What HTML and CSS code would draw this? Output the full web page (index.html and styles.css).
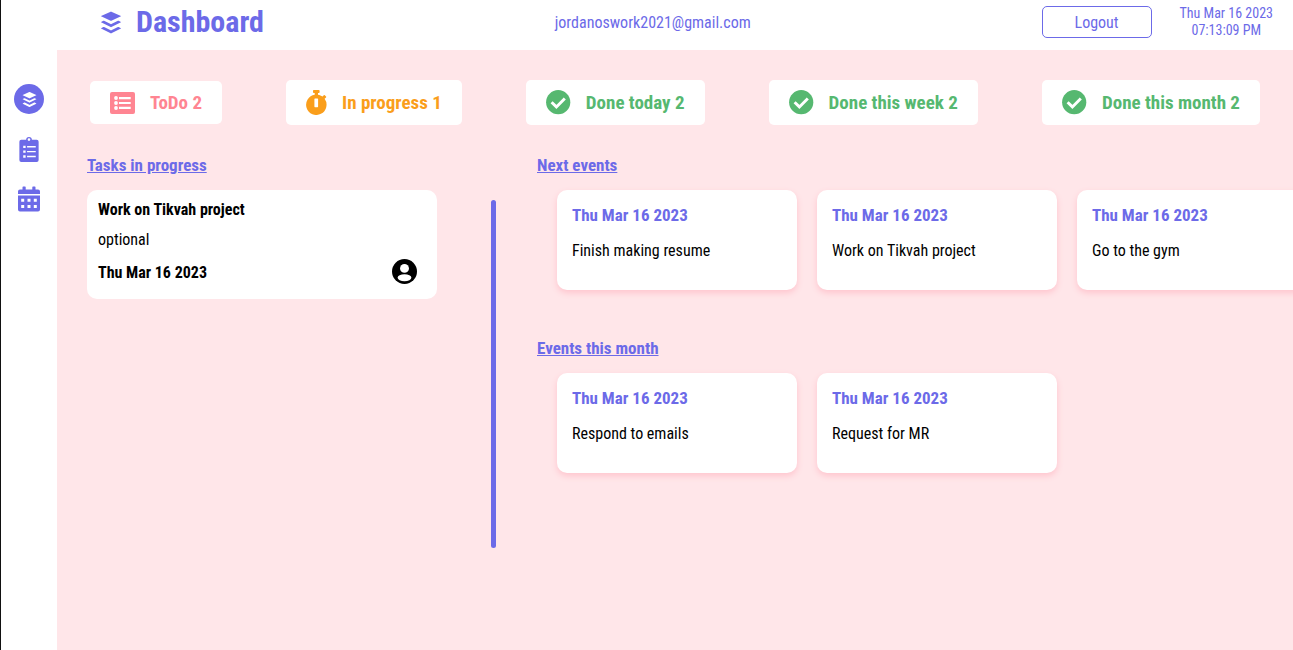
FILE: index.html
```html
<!DOCTYPE html>
<html lang="en">
<head>
<meta charset="utf-8">
<meta name="viewport" content="width=device-width, initial-scale=1">
<title>Dashboard</title>
<link rel="stylesheet" href="styles.css">
</head>
<body>
<svg class="defs" aria-hidden="true">
  <symbol id="layers" viewBox="0 0 448 512"><path d="M427.84 380.67l-196.5 97.82a18.6 18.6 0 0 1-14.67 0L20.16 380.67c-4-2-4-5.28 0-7.29L67.22 350a18.65 18.65 0 0 1 14.69 0l134.76 67a18.51 18.51 0 0 0 14.67 0l134.76-67a18.62 18.62 0 0 1 14.68 0l47.06 23.43c4.05 1.96 4.05 5.24 0 7.24zm0-136.53l-47.06-23.43a18.62 18.62 0 0 0-14.68 0l-134.76 67.08a18.68 18.68 0 0 1-14.67 0L81.91 220.71a18.65 18.65 0 0 0-14.69 0l-47.06 23.43c-4 2-4 5.29 0 7.31l196.51 97.8a18.6 18.6 0 0 0 14.67 0l196.5-97.8c4.05-2.02 4.05-5.3 0-7.31zM20.16 130.42l196.5 90.29a20.08 20.08 0 0 0 14.67 0l196.51-90.29c4-1.86 4-4.89 0-6.74L231.33 33.39a19.88 19.88 0 0 0-14.67 0l-196.5 90.28c-4.05 1.86-4.05 4.89 0 6.750z"/></symbol>
  <symbol id="check" viewBox="0 0 25 25"><circle cx="12.200" cy="12.200" r="12.100"/><path d="M5.600 12.200l4.800 4.700 8.400-8.500" fill="none" stroke="#fff" stroke-width="2.900"/></symbol>
</svg>
<div class="app">
  <header class="topbar">
    <div class="brand">
      <svg class="brand-icon"><use href="#layers"/></svg>
      <h1>Dashboard</h1>
    </div>
    <span class="email">jordanoswork2021@gmail.com</span>
    <div class="session">
      <button class="logout" type="button">Logout</button>
      <time class="clock">Thu Mar 16 2023<br>07:13:09 PM</time>
    </div>
  </header>
  <nav class="sidebar" aria-label="Main">
    <a class="nav-link active" href="#dashboard" aria-label="Dashboard"><svg><use href="#layers"/></svg></a>
    <a class="nav-link" href="#tasks" aria-label="Tasks">
      <svg viewBox="0 0 20 27"><path fill-rule="evenodd" d="M2 4h5a3 3 0 0 1 6 0h5a2 2 0 0 1 2 2v19a2 2 0 0 1-2 2H2a2 2 0 0 1-2-2V6a2 2 0 0 1 2-2zM10 2.300a1.400 1.400 0 1 0 0 2.800 1.400 1.400 0 0 0 0-2.800zM4 10v2.500h2.500V10zM8 10.500v1.500h9v-1.500zM4 15v2.500h2.500V15zM8 15.500v1.500h9v-1.500zM4 20v2.500h2.500V20zM8 20.500v1.500h9v-1.500z"/></svg>
    </a>
    <a class="nav-link" href="#calendar" aria-label="Calendar">
      <svg viewBox="0 0 22 25"><path fill-rule="evenodd" d="M5.200 0h1.800a.7.700 0 0 1 .7.700V3h6.600V.7a.7.700 0 0 1 .7-.7h1.800a.7.700 0 0 1 .7.700V3H20a2 2 0 0 1 2 2v2.500H0V5a2 2 0 0 1 2-2h2.500V.7a.7.700 0 0 1 .7-.7zM0 9h22v14a2 2 0 0 1-2 2H2a2 2 0 0 1-2-2zM3.200 12.200v3h3v-3zM9.500 12.200v3h3v-3zM15.800 12.200v3h3v-3zM3.200 18.500v3h3v-3zM9.500 18.500v3h3v-3zM15.800 18.500v3h3v-3z"/></svg>
    </a>
  </nav>
  <main class="content">
    <section class="stats" aria-label="Summary">
      <div class="stat todo">
        <svg class="stat-icon" viewBox="0 0 25 22"><rect width="25" height="22" rx="2"/><g fill="#fff"><circle cx="6" cy="6" r="1.900"/><circle cx="6" cy="11" r="1.900"/><circle cx="6" cy="16" r="1.900"/><path d="M9 5h11.700v2.200H9zM9 9.900h11.700v2.200H9zM9 14.800h11.700V17H9z"/></g></svg>
        <span>ToDo 2</span>
      </div>
      <div class="stat doing">
        <svg class="stat-icon" viewBox="0 0 21 25"><path fill-rule="evenodd" d="M7.800 0h5a.8.800 0 0 1 .8.800v1.500a.8.800 0 0 1-.8.800H12v1.600c1.700.2 3.200.9 4.500 1.800l1.300-1.300a.7.700 0 0 1 1 0l1.200 1.200a.7.700 0 0 1 0 1L18.600 8.800A10.200 10.200 0 1 1 8.700 4.700V3.100h-.9A.8.800 0 0 1 7 2.300V.8A.8.800 0 0 1 7.800 0zM9 8.600a.6.600 0 0 0-.6.600v7.400c0 .4.200.6.600.6h2.500c.4 0 .6-.2.600-.6V9.200a.6.600 0 0 0-.6-.6z"/></svg>
        <span>In progress 1</span>
      </div>
      <div class="stat done"><svg class="stat-icon"><use href="#check"/></svg><span>Done today 2</span></div>
      <div class="stat done"><svg class="stat-icon"><use href="#check"/></svg><span>Done this week 2</span></div>
      <div class="stat done"><svg class="stat-icon"><use href="#check"/></svg><span>Done this month 2</span></div>
    </section>
    <div class="board">
      <section class="tasks">
        <h2>Tasks in progress</h2>
        <article class="task">
          <h3>Work on Tikvah project</h3>
          <p>optional</p>
          <footer>
            <time>Thu Mar 16 2023</time>
            <svg class="avatar" viewBox="0 0 24 24"><circle cx="12" cy="12" r="12"/><g fill="#fff"><circle cx="12" cy="9" r="4.300"/><ellipse cx="12" cy="18" rx="6.600" ry="3.300"/></g></svg>
          </footer>
        </article>
      </section>
      <div class="divider"></div>
      <div class="events">
        <section>
          <h2>Next events</h2>
          <div class="event-row">
            <article class="event"><time>Thu Mar 16 2023</time><p>Finish making resume</p></article>
            <article class="event"><time>Thu Mar 16 2023</time><p>Work on Tikvah project</p></article>
            <article class="event"><time>Thu Mar 16 2023</time><p>Go to the gym</p></article>
          </div>
        </section>
        <section>
          <h2>Events this month</h2>
          <div class="event-row">
            <article class="event"><time>Thu Mar 16 2023</time><p>Respond to emails</p></article>
            <article class="event"><time>Thu Mar 16 2023</time><p>Request for MR</p></article>
          </div>
        </section>
      </div>
    </div>
  </main>
</div>
</body>
</html>
```
FILE: styles.css
```css
* { box-sizing: border-box; }
body, h1, h2, h3, p { margin: 0; }
body {
  font-family: "Roboto Condensed", Roboto, sans-serif;
  font-size: 16px;
  line-height: 20px;
  color: #000;
}
svg { display: block; fill: currentColor; }
.defs { display: none; }

.app {
  display: grid;
  grid-template-columns: 56px minmax(0, 1fr);
  grid-template-rows: 50px 1fr;
  min-height: 100vh;
  overflow: hidden;
  border-left: 1px solid #111;
  background: #fff;
}

.topbar {
  grid-column: 1 / -1;
  display: flex;
  align-items: center;
  justify-content: space-between;
  padding: 0 20px 6px 99px;
  color: #6c6ae8;
}
.brand { display: flex; align-items: center; gap: 14px; }
.brand-icon { width: 22px; height: 25px; }
h1 { font-size: 30px; line-height: 34px; }
.session { display: flex; align-items: center; gap: 28px; }
.email { line-height: 22px; padding-top: 2px; }
.logout {
  width: 110px;
  height: 32px;
  padding: 2px 0 0;
  border: 1px solid #6c6ae8;
  border-radius: 5px;
  background: #fff;
  color: inherit;
  font: inherit;
}
.clock { font-size: 14px; line-height: 17px; text-align: center; }

.sidebar {
  display: flex;
  flex-direction: column;
  align-items: center;
  gap: 20px;
  padding-top: 34px;
}
.nav-link { display: grid; place-items: center; width: 30px; height: 30px; color: #6c6ae8; }
.nav-link svg { width: 22px; height: 26px; }
.nav-link.active { border-radius: 50%; background: #6c6ae8; color: #fff; }
.nav-link.active svg { width: 15px; height: 17px; }

.content { padding: 30px 0 30px 30px; background: #ffe6e9; }
.stats {
  display: flex;
  align-items: center;
  justify-content: space-between;
  height: 45px;
  padding: 0 33px 0 3px;
}
.stat {
  display: flex;
  align-items: center;
  gap: 15px;
  padding: 10px 20px;
  border-radius: 5px;
  background: #fff;
  font-size: 19px;
  line-height: 23px;
  font-weight: 700;
  white-space: nowrap;
}
.stat-icon { width: 25px; height: 25px; }
.todo { color: #ff8592; }
.todo .stat-icon { height: 22px; }
.doing { color: #fa9e1b; }
.doing .stat-icon { width: 21px; }
.done { color: #56b870; }

.board { display: flex; padding-top: 30px; }
h2 {
  margin-bottom: 15px;
  color: #6c6ae8;
  font-size: 17px;
  line-height: 20px;
  text-decoration: underline;
}
.tasks { flex: none; width: 350px; }
.task { padding: 10px 20px 12px 11px; border-radius: 10px; background: #fff; }
.task h3 { margin-bottom: 10px; font-size: 16px; line-height: 20px; }
.task footer { display: flex; align-items: flex-start; justify-content: space-between; margin-top: 9px; font-weight: 700; }
.task time { line-height: 28px; }
.avatar { width: 25px; height: 25px; }
.divider {
  flex: none;
  width: 5px;
  height: 348px;
  margin: 45px 41px 0 54px;
  border-radius: 3px;
  background: #6c6ae8;
}
.events { display: grid; align-content: start; gap: 48px; min-width: 0; }
.event-row { display: flex; gap: 20px; padding-left: 20px; }
.event {
  flex: none;
  width: 240px;
  height: 100px;
  padding: 15px;
  border-radius: 10px;
  background: #fff;
  box-shadow: 0 3px 6px #ffc5ce;
}
.event time { display: block; margin-bottom: 16px; color: #6c6ae8; font-size: 17px; font-weight: 700; }
```
